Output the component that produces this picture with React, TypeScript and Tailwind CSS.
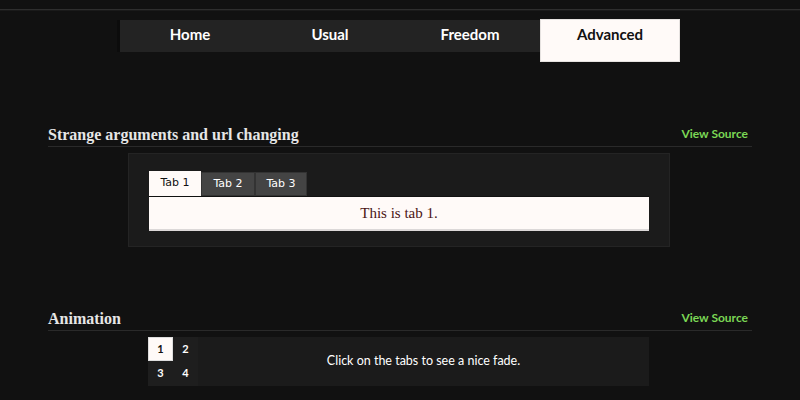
export default function App() {
  const navItems = ["Home", "Usual", "Freedom"];

  return (
    <div className="w-[800px] h-[400px] overflow-hidden bg-[#111111]" style={{ fontFamily: "Lato, 'Open Sans', sans-serif" }}>
      {/* top rule */}
      <div className="h-[9px]" />
      <div className="h-px bg-[#2e2e2e]" />
      <div className="h-px bg-[#1a1a1a]" />

      {/* Nav */}
      <nav className="mx-auto mt-[8px] flex w-[560px] items-start">
        <div className="mt-px flex h-[32px] w-[420px] bg-[#232323] shadow-[-3px_0_0_#0c0c0c]">
          {navItems.map((item) => (
            <div key={item} className="w-[140px] pt-[4px] text-center text-[15px] font-bold leading-[20px] text-white">
              {item}
            </div>
          ))}
        </div>
        <div className="h-[43px] w-[140px] border border-[#e6e2e0] bg-[#fffaf8] pt-[4px] text-center text-[15px] font-bold leading-[20px] text-[#111111]">
          Advanced
        </div>
      </nav>

      <main className="mx-auto w-[704px]">
        {/* Section 1 */}
        <div className="mt-[63px] flex h-[22px] items-end justify-between border-b border-[#2a2a2a]">
          <h2 className="pb-[1px] text-[16px] font-bold leading-[20px] text-[#e6e6e6]" style={{ fontFamily: "'Liberation Serif', serif" }}>
            Strange arguments and url changing
          </h2>
          <a className="mr-[4px] pb-[5px] text-[12px] font-bold leading-[14px] text-[#7bd755]">View Source</a>
        </div>

        <div className="ml-[80px] mt-[6px] h-[94px] w-[542px] border border-[#242424] bg-[#1b1b1b] px-[20px] pt-[18px]">
          <div className="flex h-[25px] items-end border-b border-[#111111]" style={{ fontFamily: "'DejaVu Sans', sans-serif" }}>
            <div className="h-[25px] w-[52px] bg-[#fffaf8] pt-[5px] text-center text-[11px] leading-[14px] text-[#111111]">Tab 1</div>
            <div className="h-[24px] w-[54px] border border-[#333333] bg-[#444444] pt-[4px] text-center text-[11px] leading-[14px] text-white">Tab 2</div>
            <div className="h-[24px] w-[52px] border border-[#333333] bg-[#444444] pt-[4px] text-center text-[11px] leading-[14px] text-white">Tab 3</div>
          </div>
          <div className="flex h-[34px] items-center justify-center border-b-2 border-[#dcd8d8] bg-[#fffaf8] text-[15px] text-[#4a1414]" style={{ fontFamily: "'Liberation Serif', serif" }}>
            This is tab 1.
          </div>
        </div>

        {/* Section 2 */}
        <div className="mt-[62px] flex h-[22px] items-end justify-between border-b border-[#2a2a2a]">
          <h2 className="pb-[1px] text-[16px] font-bold leading-[20px] text-[#e6e6e6]" style={{ fontFamily: "'Liberation Serif', serif" }}>
            Animation
          </h2>
          <a className="mr-[4px] pb-[5px] text-[12px] font-bold leading-[14px] text-[#7bd755]">View Source</a>
        </div>

        <div className="ml-[100px] mt-[6px] flex h-[49px] w-[501px] bg-[#1b1b1b]">
          <div className="grid w-[50px] grid-cols-2 bg-[#1e1e1e]">
            {["1", "2", "3", "4"].map((n, i) => (
              <div
                key={n}
                className={
                  i === 0
                    ? "flex h-[24px] items-center justify-center border border-[#dddddd] bg-[#fffaf8] text-[11px] font-bold text-[#111111]"
                    : "flex h-[24px] items-center justify-center text-[11px] font-bold text-white"
                }
              >
                {n}
              </div>
            ))}
          </div>
          <div className="flex flex-1 items-center justify-center text-[12.5px] text-white">
            Click on the tabs to see a nice fade.
          </div>
        </div>
      </main>
    </div>
  );
}
